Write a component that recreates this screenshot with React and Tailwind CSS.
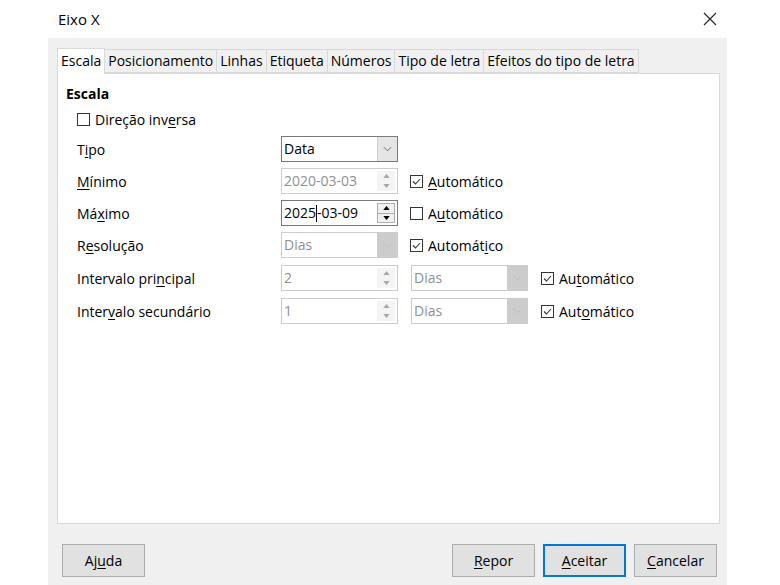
import { useState } from 'react';

const TABS = [
  'Escala',
  'Posicionamento',
  'Linhas',
  'Etiqueta',
  'Números',
  'Tipo de letra',
  'Efeitos do tipo de letra',
];

// text with one underlined mnemonic letter
function Mn({ text, at }) {
  return (
    <span>
      {text.slice(0, at)}
      <span className="underline underline-offset-2">{text[at]}</span>
      {text.slice(at + 1)}
    </span>
  );
}

function CheckBox({ checked }) {
  return (
    <span className="w-[13px] h-[13px] border border-[#333] bg-white flex items-center justify-center shrink-0">
      {checked && (
        <svg viewBox="0 0 11 11" className="w-[11px] h-[11px]">
          <path d="M2 5.5l2.5 2.5L9 3" fill="none" stroke="#333" strokeWidth="1.1" />
        </svg>
      )}
    </span>
  );
}

function Chevron({ color }) {
  return (
    <svg viewBox="0 0 10 6" className="w-[9px] h-[6px]">
      <path d="M1 1l4 4 4-4" fill="none" stroke={color} strokeWidth="1" />
    </svg>
  );
}

function Arrow({ up, color }) {
  return (
    <svg viewBox="0 0 8 5" className="w-[7px] h-[4px]">
      <path d={up ? 'M0 5L4 0L8 5Z' : 'M0 0L8 0L4 5Z'} fill={color} />
    </svg>
  );
}

function Combo({ value, disabled }) {
  return (
    <div
      className={`w-[117px] h-[26px] flex border ${disabled ? 'border-[#cccccc] bg-white text-[#8f8f8f]' : 'border-[#7a7a7a] bg-white text-black'}`}
    >
      <span className="flex-1 pl-[2px] leading-[24px]">{value}</span>
      <span
        className={`w-[20px] flex items-center justify-center ${disabled ? 'bg-[#cccccc]' : 'bg-[#e5e5e5] border-l border-[#cfcfcf]'}`}
      >
        <Chevron color={disabled ? '#bdbdbd' : '#606060'} />
      </span>
    </div>
  );
}

function Spin({ value, disabled, active }) {
  const c = disabled ? '#a8a8a8' : '#000';
  return (
    <div
      className={`w-[117px] h-[26px] flex border ${disabled ? 'border-[#cccccc] text-[#8f8f8f]' : 'border-[#7a7a7a] text-black'} bg-white`}
    >
      <span className="flex-1 pl-[2px] leading-[24px] flex items-center">
        {active ? (
          <>
            2025<span className="w-px h-[17px] bg-black" />-03-09
          </>
        ) : (
          value
        )}
      </span>
      <span className="w-[20px] flex flex-col py-[2px] pr-[2px]">
        <span
          className={`flex-1 flex items-center justify-center ${disabled ? 'bg-[#f4f4f4]' : 'bg-[#f0f0f0] border border-[#adadad]'}`}
        >
          <Arrow up color={c} />
        </span>
        <span
          className={`flex-1 flex items-center justify-center ${disabled ? 'bg-[#f4f4f4]' : 'bg-[#f0f0f0] border border-[#adadad] border-t-0'}`}
        >
          <Arrow color={c} />
        </span>
      </span>
    </div>
  );
}

function Auto({ checked, at }) {
  return (
    <div className="flex items-center gap-[5px]">
      <CheckBox checked={checked} />
      <Mn text="Automático" at={at} />
    </div>
  );
}

function Row({ label, at, gap, children }) {
  return (
    <div className={`h-[26px] flex items-center ${gap}`}>
      <span className="w-[215px] pl-[11px]">
        <Mn text={label} at={at} />
      </span>
      {children}
    </div>
  );
}

function Btn({ text, at, primary }) {
  return (
    <button
      className={`w-[83px] h-[33px] bg-[#e1e1e1] ${primary ? 'border-2 border-[#0078d7]' : 'border border-[#adadad]'} text-black`}
    >
      <Mn text={text} at={at} />
    </button>
  );
}

export default function App() {
  const [tab] = useState(0);

  return (
    <div className="w-[780px] h-[585px] bg-white flex flex-col text-[14px] text-black font-['Open_Sans',sans-serif]">
      {/* title bar */}
      <div className="h-[38px] flex items-center justify-between pl-[58px] pr-[63px]">
        <span className="text-[15px]">Eixo X</span>
        <svg viewBox="0 0 14 14" className="w-[14px] h-[14px]">
          <path d="M1 1l12 12M13 1L1 13" stroke="#222" strokeWidth="1.1" />
        </svg>
      </div>

      {/* dialog body */}
      <div className="ml-[48px] w-[679px] flex-1 bg-[#f0f0f0] flex flex-col pt-[10px] pl-[9px] pr-[7px]">
        {/* tabs */}
        <div className="h-[25px] flex items-end">
          {TABS.map((t, i) =>
            i === tab ? (
              <span
                key={t}
                className="h-[26px] px-[3px] bg-white border border-b-0 border-[#d9d9d9] leading-[24px] -mb-px relative z-10"
              >
                {t}
              </span>
            ) : (
              <span
                key={t}
                className="h-[24px] px-[3px] bg-[#f0f0f0] border border-l-0 border-[#d9d9d9] leading-[22px]"
              >
                {t}
              </span>
            )
          )}
        </div>

        {/* panel */}
        <div className="h-[451px] bg-white border border-[#d9d9d9] flex flex-col pl-[8px] pt-[9px]">
          <div className="h-[20px] flex items-center font-bold">Escala</div>
          <div className="h-[20px] mt-[6px] flex items-center gap-[5px] pl-[11px]">
            <CheckBox />
            <Mn text="Direção inversa" at={11} />
          </div>

          <div className="mt-[7px] flex flex-col">
            <Row label="Tipo" at={1}>
              <Combo value="Data" />
            </Row>
            <Row label="Mínimo" at={0} gap="mt-[6px]">
              <Spin value="2020-03-03" disabled />
              <div className="ml-[12px]">
                <Auto checked at={0} />
              </div>
            </Row>
            <Row label="Máximo" at={2} gap="mt-[6px]">
              <Spin active />
              <div className="ml-[12px]">
                <Auto at={1} />
              </div>
            </Row>
            <Row label="Resolução" at={1} gap="mt-[6px]">
              <Combo value="Dias" disabled />
              <div className="ml-[12px]">
                <Auto checked at={7} />
              </div>
            </Row>
            <Row label="Intervalo principal" at={13} gap="mt-[7px]">
              <Spin value="2" disabled />
              <div className="ml-[13px]">
                <Combo value="Dias" disabled />
              </div>
              <div className="ml-[13px]">
                <Auto checked at={2} />
              </div>
            </Row>
            <Row label="Intervalo secundário" at={5} gap="mt-[7px]">
              <Spin value="1" disabled />
              <div className="ml-[13px]">
                <Combo value="Dias" disabled />
              </div>
              <div className="ml-[13px]">
                <Auto checked at={3} />
              </div>
            </Row>
          </div>
        </div>

        {/* buttons */}
        <div className="mt-[20px] flex items-center pl-[5px] pr-[3px]">
          <Btn text="Ajuda" at={2} />
          <div className="flex-1" />
          <div className="flex gap-[8px]">
            <Btn text="Repor" at={0} />
            <Btn text="Aceitar" at={0} primary />
            <Btn text="Cancelar" at={0} />
          </div>
        </div>
      </div>
    </div>
  );
}
